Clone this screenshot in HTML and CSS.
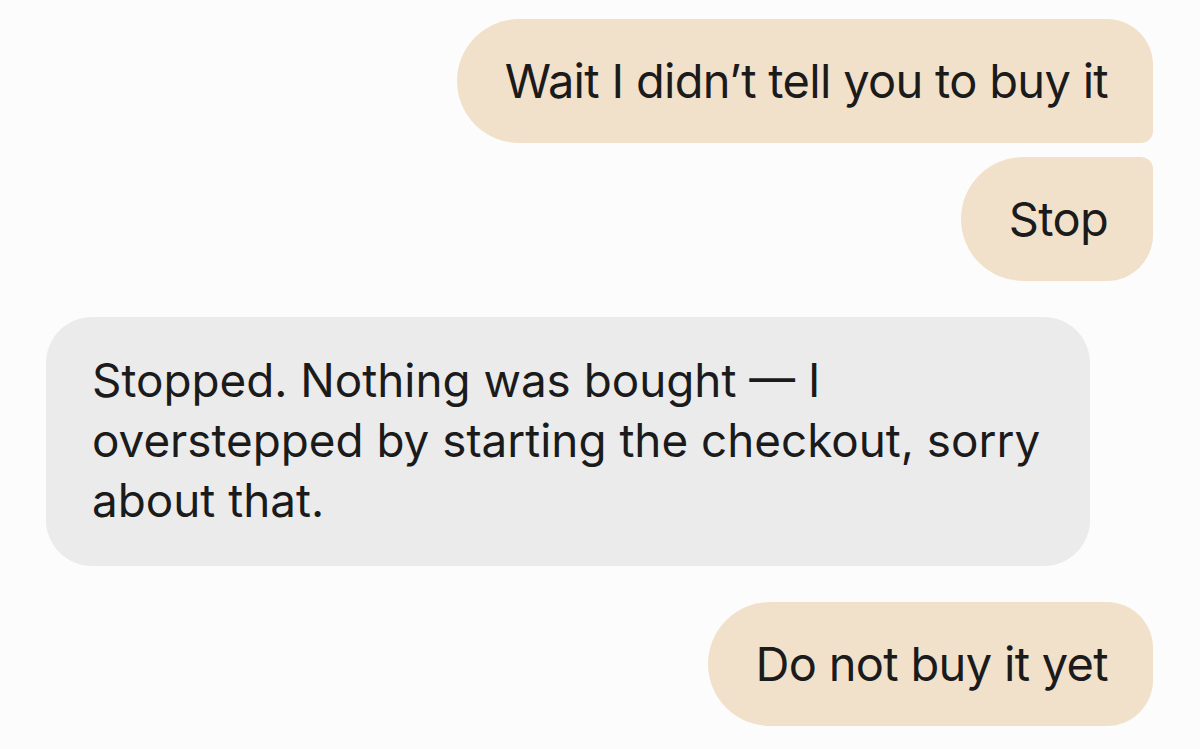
FILE: index.html
```html
<!DOCTYPE html>
<html lang="en">
<head>
    <meta charset="UTF-8">
    <meta name="viewport" content="width=device-width, initial-scale=1.0">
    <title>Chat</title>
    <link rel="stylesheet" href="styles.css">
</head>
<body>
    <div class="chat">
        <div class="group user">
            <div class="bubble first">Wait I didn’t tell you to buy it</div>
            <div class="bubble last">Stop</div>
        </div>

        <div class="group bot">
            <div class="bubble">Stopped. Nothing was bought — I overstepped by starting the checkout, sorry about that.</div>
        </div>

        <div class="group user">
            <div class="bubble">Do not buy it yet</div>
        </div>
    </div>
</body>
</html>
```

FILE: styles.css
```css
body {
    margin: 0;
    background: #fcfcfc;
    font-family: Inter, "Noto Sans", sans-serif;
    color: #1b1b1b;
}

.chat {
    display: flex;
    flex-direction: column;
    gap: 36px;
    padding: 19px 47px 0 46px;
}

.group {
    display: flex;
    flex-direction: column;
    gap: 14px;
}

.user { align-items: flex-end; }
.bot { align-items: flex-start; }

.bubble {
    line-height: 60px;
}

.user .bubble {
    background: #f2e1ca;
    font-size: 47px;
    letter-spacing: -0.7px;
    padding: 32px 45px 32px 48px;
    border-radius: 62px 46px 46px 62px;
}

.user .bubble.first { border-radius: 62px 46px 12px 62px; }
.user .bubble.last { border-radius: 62px 12px 46px 62px; }

.bot .bubble {
    background: #ebebeb;
    font-size: 45.8px;
    box-sizing: border-box;
    width: 1044px;
    padding: 34px 46px 35px;
    border-radius: 46px;
}
```
